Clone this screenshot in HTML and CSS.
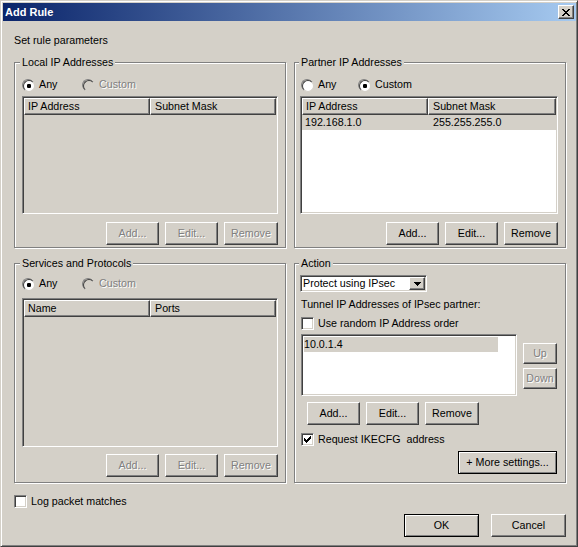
FILE: index.html
```html
<!DOCTYPE html>
<html lang="en">
<head>
<meta charset="utf-8">
<title>Add Rule</title>
<link rel="stylesheet" href="styles.css">
</head>
<body>
<div class="window">
  <div class="titlebar">
    <span class="title">Add Rule</span>
    <span class="close-btn" aria-label="Close">
      <svg width="8" height="7" viewBox="0 0 8 7" shape-rendering="crispEdges"><path d="M0 0h2v1H0z M6 0h2v1H6z M1 1h2v1H1z M5 1h2v1H5z M2 2h4v1H2z M3 3h2v1H3z M2 4h4v1H2z M1 5h2v1H1z M5 5h2v1H5z M0 6h2v1H0z M6 6h2v1H6z" fill="#000"/></svg>
    </span>
  </div>
  <div class="dialog">
    <div class="intro">Set rule parameters</div>
    <div class="groups">
      <section class="group">
        <div class="legend">Local IP Addresses</div>
        <div class="opts">
          <label class="opt first"><span class="radio checked"></span>Any</label>
          <label class="opt disabled"><span class="radio"></span>Custom</label>
        </div>
        <div class="listbox off list-top">
          <div class="lhead"><div class="hcell c1">IP Address</div><div class="hcell c2">Subnet Mask</div></div>
        </div>
        <div class="btnrow">
          <button type="button" class="btn" disabled>Add...</button>
          <button type="button" class="btn" disabled>Edit...</button>
          <button type="button" class="btn wide" disabled>Remove</button>
        </div>
      </section>

      <section class="group right">
        <div class="legend">Partner IP Addresses</div>
        <div class="opts">
          <label class="opt first"><span class="radio"></span>Any</label>
          <label class="opt"><span class="radio checked"></span>Custom</label>
        </div>
        <div class="listbox list-top shift">
          <div class="lhead"><div class="hcell c1">IP Address</div><div class="hcell c2">Subnet Mask</div></div>
          <div class="lrow"><span class="c1">192.168.1.0</span><span class="c2">255.255.255.0</span></div>
        </div>
        <div class="btnrow">
          <button type="button" class="btn">Add...</button>
          <button type="button" class="btn">Edit...</button>
          <button type="button" class="btn wide">Remove</button>
        </div>
      </section>

      <section class="group row2">
        <div class="legend">Services and Protocols</div>
        <div class="opts">
          <label class="opt first"><span class="radio checked"></span>Any</label>
          <label class="opt disabled"><span class="radio"></span>Custom</label>
        </div>
        <div class="listbox off list-svc">
          <div class="lhead"><div class="hcell c1">Name</div><div class="hcell c2">Ports</div></div>
        </div>
        <div class="btnrow svc-btns">
          <button type="button" class="btn" disabled>Add...</button>
          <button type="button" class="btn" disabled>Edit...</button>
          <button type="button" class="btn wide" disabled>Remove</button>
        </div>
      </section>

      <section class="group right row2">
        <div class="legend">Action</div>
        <div class="combo">
          <span class="combo-text">Protect using IPsec</span>
          <span class="combo-btn"><svg width="7" height="4" viewBox="0 0 7 4" shape-rendering="crispEdges"><path d="M0 0h7v1H0z M1 1h5v1H1z M2 2h3v1H2z M3 3h1v1H3z" fill="#000"/></svg></span>
        </div>
        <div class="tunnel-label">Tunnel IP Addresses of IPsec partner:</div>
        <label class="chk random"><span class="cbox"></span>Use random IP Address order</label>
        <div class="tunnel-area">
          <div class="listbox tlist"><div class="trow">10.0.1.4</div></div>
          <div class="updown">
            <button type="button" class="btn small up" disabled>Up</button>
            <button type="button" class="btn small down" disabled>Down</button>
          </div>
        </div>
        <div class="btnrow start">
          <button type="button" class="btn">Add...</button>
          <button type="button" class="btn">Edit...</button>
          <button type="button" class="btn wide">Remove</button>
        </div>
        <label class="chk ike"><span class="cbox"><svg width="9" height="9" viewBox="0 0 9 9" shape-rendering="crispEdges"><path d="M7 1h1v1H7z M6 2h2v1H6z M1 3h1v1H1z M5 3h3v1H5z M1 4h2v1H1z M4 4h3v1H4z M1 5h5v1H1z M2 6h3v1H2z M3 7h1v1H3z" fill="#000"/></svg></span>Request IKECFG&nbsp; address</label>
        <div class="btnrow more-row">
          <button type="button" class="btn default more">+ More settings...</button>
        </div>
      </section>
    </div>

    <div class="footer">
      <label class="chk"><span class="cbox"></span>Log packet matches</label>
      <div class="dlg-btns">
        <button type="button" class="btn default dlg">OK</button>
        <button type="button" class="btn dlg">Cancel</button>
      </div>
    </div>
  </div>
</div>
</body>
</html>
```
FILE: styles.css
```css
* { box-sizing: border-box; }

html, body {
  margin: 0;
  padding: 0;
  background: #D4D0C8;
}

body {
  font-family: "Liberation Sans", Arial, sans-serif;
  font-size: 10.7px;
  line-height: 13px;
  color: #000;
}

.window {
  width: 578px;
  height: 547px;
  display: flex;
  flex-direction: column;
  background: #D4D0C8;
  border: 1px solid;
  border-color: #D4D0C8 #404040 #404040 #D4D0C8;
  padding: 2px 1px 1px 2px;
  box-shadow: inset 1px 1px 0 #fff, inset -1px -1px 0 #808080;
}

/* Title bar */
.titlebar {
  flex: none;
  height: 18px;
  display: flex;
  align-items: center;
  justify-content: space-between;
  padding: 0 2px;
  background: linear-gradient(to right, #0A246A, #A6CAF0);
}

.title {
  color: #fff;
  font-weight: bold;
  font-size: 11px;
}

.close-btn {
  width: 16px;
  height: 14px;
  display: flex;
  align-items: center;
  justify-content: center;
  padding-top: 1px;
  background: #D4D0C8;
  border: 1px solid;
  border-color: #fff #404040 #404040 #fff;
  box-shadow: inset -1px -1px 0 #808080;
}

.close-btn svg { display: block; }

/* Dialog body */
.dialog {
  flex: 1;
  display: flex;
  flex-direction: column;
  padding: 13px 10px 0 11px;
}

.intro { margin: 0 0 15px; }

.groups {
  display: grid;
  grid-template-columns: 272px 272px;
  grid-template-rows: 186px 220px;
  column-gap: 8px;
  row-gap: 15px;
}

.group {
  position: relative;
  display: flex;
  flex-direction: column;
  border: 1px solid #808080;
  box-shadow: 1px 1px 0 #fff, inset 1px 1px 0 #fff;
  padding: 0 7px;
}

.group.right { padding: 0 7px 0 6px; }

.legend {
  position: absolute;
  top: -7px;
  left: 5px;
  padding: 0 2px;
  background: #D4D0C8;
  white-space: nowrap;
}

.group.right .legend { left: 4px; }

/* Radio options */
.opts {
  display: flex;
  align-items: center;
  height: 13px;
  margin-top: 15px;
}

.group.row2 .opts { margin-top: 13px; }

.opt {
  display: flex;
  align-items: center;
  gap: 5px;
  white-space: nowrap;
}

.opt.first { width: 60px; }
.group.right .opt.first { width: 57px; }

.opt.disabled {
  color: #808080;
  text-shadow: 1px 1px 0 #fff;
}

.radio {
  flex: none;
  width: 12px;
  height: 12px;
  border-radius: 50%;
  border: 1px solid;
  border-color: #808080 #fff #fff #808080;
}

.radio::before {
  content: "";
  display: block;
  width: 10px;
  height: 10px;
  border-radius: 50%;
  border: 1px solid;
  border-color: #404040 #D4D0C8 #D4D0C8 #404040;
  background: #fff;
}

.radio.checked::before {
  background: radial-gradient(circle at center, #000 0 2px, #fff 2.4px);
}

.opt.disabled .radio::before { background: #D4D0C8; }

/* List views */
.listbox {
  border: 1px solid;
  border-color: #808080 #fff #fff #808080;
  padding: 1px;
  box-shadow: inset 1px 1px 0 #404040, inset -1px -1px 0 #D4D0C8;
  background: #fff;
}

.listbox.off { background: #D4D0C8; }

.list-top {
  height: 118px;
  margin-top: 5px;
}

.listbox.shift { margin-left: -1px; }

.list-svc {
  height: 149px;
  margin-top: 8px;
}

.lhead {
  display: flex;
  height: 17px;
}

.hcell {
  height: 17px;
  border: 1px solid;
  border-color: #fff #404040 #404040 #fff;
  box-shadow: inset -1px -1px 0 #808080;
  background: #D4D0C8;
  line-height: 15px;
  padding-left: 3px;
  white-space: nowrap;
}

.hcell.c1 { width: 126px; flex: none; }
.hcell.c2 { flex: 1; padding-left: 4px; }

.lrow {
  display: flex;
  height: 15px;
  line-height: 15px;
  background: #D4D0C8;
  white-space: nowrap;
}

.lrow .c1 { width: 126px; padding-left: 3px; }
.lrow .c2 { padding-left: 5px; }

/* Buttons */
.btnrow {
  display: flex;
  justify-content: flex-end;
  gap: 6px;
  margin-top: 8px;
}

.btnrow.svc-btns { margin-top: 7px; }

.btn {
  appearance: none;
  -webkit-appearance: none;
  margin: 0;
  font: inherit;
  width: 53px;
  height: 23px;
  padding: 0;
  line-height: 21px;
  text-align: center;
  white-space: nowrap;
  background: #D4D0C8;
  color: #000;
  border: 1px solid;
  border-color: #fff #404040 #404040 #fff;
  border-radius: 0;
  box-shadow: inset -1px -1px 0 #808080;
}

.btn.wide { width: 54px; }

.btn:disabled {
  color: #808080;
  text-shadow: 1px 1px 0 #fff;
}

.btn.default {
  border-color: #000;
  box-shadow: inset 1px 1px 0 #fff, inset -1px -1px 0 #808080;
}

.btn.dlg { width: 75px; }

/* Action group */
.combo {
  display: flex;
  width: 127px;
  height: 17px;
  margin: 11px 0 0 -1px;
  border: 1px solid;
  border-color: #808080 #fff #fff #808080;
  padding: 1px;
  box-shadow: inset 1px 1px 0 #404040, inset -1px -1px 0 #D4D0C8;
  background: #fff;
}

.combo-text {
  flex: 1;
  padding-left: 1px;
  white-space: nowrap;
  overflow: hidden;
}

.combo-btn {
  flex: none;
  width: 16px;
  height: 13px;
  display: flex;
  align-items: center;
  justify-content: center;
  background: #D4D0C8;
  border: 1px solid;
  border-color: #fff #404040 #404040 #fff;
  box-shadow: inset -1px -1px 0 #808080;
}

.combo-btn svg { display: block; }

.tunnel-label {
  margin-top: 6px;
  white-space: nowrap;
}

.chk {
  display: flex;
  align-items: center;
  gap: 4px;
  height: 13px;
  white-space: nowrap;
}

.chk.random { margin-top: 6px; }
.chk.ike { margin-top: 8px; }

.cbox {
  flex: none;
  display: flex;
  width: 13px;
  height: 13px;
  border: 1px solid;
  border-color: #808080 #fff #fff #808080;
  padding: 1px;
  box-shadow: inset 1px 1px 0 #404040, inset -1px -1px 0 #D4D0C8;
  background: #fff;
}

.cbox svg { display: block; }

.tunnel-area {
  display: flex;
  margin-top: 4px;
}

.tlist {
  width: 216px;
  height: 62px;
}

.trow {
  width: 194px;
  height: 15px;
  margin: 1px 0 0 1px;
  line-height: 15px;
  background: #D4D0C8;
}

.updown {
  display: flex;
  flex-direction: column;
  margin-left: 6px;
}

.btn.small {
  width: 34px;
  height: 21px;
  line-height: 19px;
}

.btn.up { margin-top: 9px; }
.btn.down { margin-top: 4px; }

.btnrow.start {
  justify-content: flex-start;
  margin: 6px 0 0 6px;
}

.btnrow.more-row {
  margin: 5px 1px 0 0;
}

.btn.more { width: 99px; }

/* Footer */
.footer { margin-top: 12px; }

.dlg-btns {
  display: flex;
  justify-content: flex-end;
  gap: 12px;
  margin-top: 6px;
}
```
